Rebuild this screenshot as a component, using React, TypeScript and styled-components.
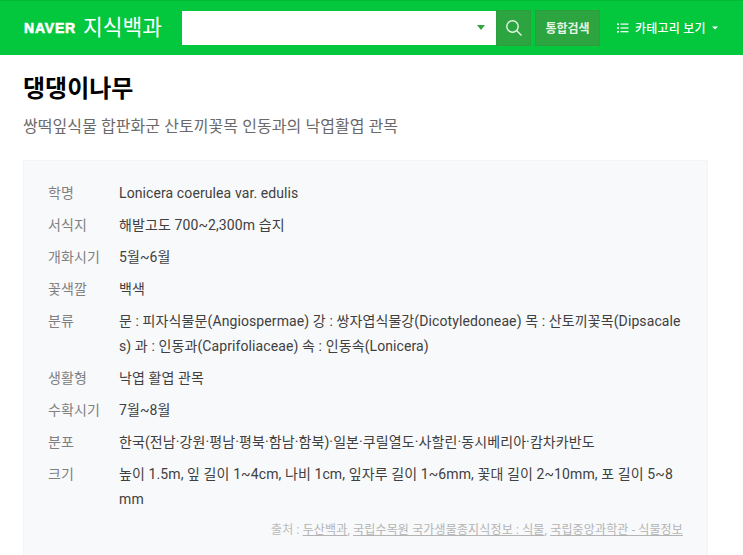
import React from "react";
import styled, { createGlobalStyle } from "styled-components";

const Global = createGlobalStyle`
  html, body { margin: 0; padding: 0; background: #fff; overflow: hidden; height: 555px; }
  body { font-family: Roboto, "Noto Sans CJK KR", "Noto Sans", sans-serif; }
  * { box-sizing: border-box; }
`;

const Page = styled.div`
  width: 743px;
  height: 555px;
  overflow: hidden;
  display: flex;
  flex-direction: column;
`;

const Header = styled.header`
  flex: none;
  height: 55px;
  background: #03c73c;
  border-top: 1px solid #02b836;
  display: flex;
  align-items: center;
  padding: 0 0 1px 24px;
`;

const Logo = styled.div`
  width: 158px;
  display: flex;
  align-items: center;
  gap: 7px;
  color: #fff;
`;

const NaverMark = styled.span`
  font-family: "Liberation Sans", sans-serif;
  font-weight: 700;
  font-size: 14px;
  letter-spacing: 0.8px;
  -webkit-text-stroke: 0.6px #fff;
`;

const LogoText = styled.span`
  font-size: 21.5px;
  font-weight: 400;
  line-height: 30px;
`;

const SearchBox = styled.div`
  width: 314px;
  height: 34px;
  background: #fff;
  display: flex;
  align-items: center;
  justify-content: flex-end;
  padding-right: 11px;
`;

const Caret = styled.span`
  width: 0;
  height: 0;
  border-left: 4px solid transparent;
  border-right: 4px solid transparent;
  border-top: 5px solid #2fa53f;
`;

const SearchButton = styled.button`
  width: 35px;
  height: 36px;
  padding: 0;
  background: #2ca540;
  border: 1px solid #2a9f3d;
  display: flex;
  align-items: center;
  justify-content: center;
`;

const TotalButton = styled.button`
  width: 65px;
  height: 36px;
  margin-left: 4px;
  padding: 0;
  background: #2ca540;
  border: 1px solid #2a9f3d;
  color: #e4f4e6;
  font-family: inherit;
  font-size: 12px;
  font-weight: 700;
`;

const CategoryButton = styled.div`
  margin-left: 17px;
  display: flex;
  align-items: center;
  color: #fff;
  font-size: 12px;
  font-weight: 500;
  letter-spacing: 0.2px;
  gap: 6px;
`;

const Content = styled.main`
  flex: 1;
  min-height: 0;
  display: flex;
  flex-direction: column;
  padding: 0 35px 0 23px;
`;

const Title = styled.h1`
  margin: 16px 0 0;
  font-size: 24px;
  line-height: 36px;
  font-weight: 700;
  color: #000;
`;

const Subtitle = styled.p`
  margin: 8px 0 0;
  font-size: 16px;
  line-height: 24px;
  font-weight: 400;
  letter-spacing: 0.07px;
  color: #6a6a6a;
`;

const Panel = styled.section`
  flex: 1;
  margin-top: 21px;
  background: #f8f9fb;
  border: 1px solid #f3f4f6;
  border-bottom: 0;
  padding: 16px 24px 0;
`;

const Row = styled.div`
  display: grid;
  grid-template-columns: 71px 1fr;
  padding: 3.5px 0;
  font-size: 14px;
  line-height: 25px;
  letter-spacing: 0.1px;
`;

const Label = styled.div`
  color: #808080;
`;

const Value = styled.div`
  color: #404040;
  word-break: break-all;
`;

const Source = styled.div`
  margin-top: 5px;
  text-align: right;
  font-size: 12px;
  line-height: 20px;
  letter-spacing: 0.15px;
  color: #bbb;
`;

const SourceLink = styled.a`
  color: #b4b4b4;
  text-decoration: underline;
`;

const rows: [string, string][] = [
  ["학명", "Lonicera coerulea var. edulis"],
  ["서식지", "해발고도 700~2,300m 습지"],
  ["개화시기", "5월~6월"],
  ["꽃색깔", "백색"],
  ["분류", "문 : 피자식물문(Angiospermae) 강 : 쌍자엽식물강(Dicotyledoneae) 목 : 산토끼꽃목(Dipsacales) 과 : 인동과(Caprifoliaceae) 속 : 인동속(Lonicera)"],
  ["생활형", "낙엽 활엽 관목"],
  ["수확시기", "7월~8월"],
  ["분포", "한국(전남·강원·평남·평북·함남·함북)·일본·쿠릴열도·사할린·동시베리아·캄차카반도"],
  ["크기", "높이 1.5m, 잎 길이 1~4cm, 나비 1cm, 잎자루 길이 1~6mm, 꽃대 길이 2~10mm, 포 길이 5~8mm"],
];

export default function App() {
  return (
    <Page>
      <Global />
      <Header>
        <Logo>
          <NaverMark>NAVER</NaverMark>
          <LogoText>지식백과</LogoText>
        </Logo>
        <SearchBox>
          <Caret />
        </SearchBox>
        <SearchButton aria-label="검색">
          <svg width="18" height="18" viewBox="0 0 18 18" fill="none" stroke="#e6f5e8" strokeWidth="1.4">
            <circle cx="7.5" cy="7.5" r="5.7" />
            <path d="M11.6 11.6 L16.5 16.5" />
          </svg>
        </SearchButton>
        <TotalButton>통합검색</TotalButton>
        <CategoryButton>
          <svg width="12" height="10" viewBox="0 0 12 10" fill="#fff">
            <rect x="0" y="0.5" width="2" height="1.6" />
            <rect x="3.5" y="0.5" width="8" height="1.2" />
            <rect x="0" y="4.2" width="2" height="1.6" />
            <rect x="3.5" y="4.4" width="8" height="1.2" />
            <rect x="0" y="7.9" width="2" height="1.6" />
            <rect x="3.5" y="8.1" width="8" height="1.2" />
          </svg>
          <span>카테고리 보기</span>
          <svg width="6" height="4" viewBox="0 0 6 4" fill="#fff">
            <path d="M0 0.5 H6 L3 3.5 Z" />
          </svg>
        </CategoryButton>
      </Header>
      <Content>
        <Title>댕댕이나무</Title>
        <Subtitle>쌍떡잎식물 합판화군 산토끼꽃목 인동과의 낙엽활엽 관목</Subtitle>
        <Panel>
          {rows.map(([k, v]) => (
            <Row key={k}>
              <Label>{k}</Label>
              <Value>{v}</Value>
            </Row>
          ))}
          <Source>
            출처 : <SourceLink>두산백과</SourceLink>, <SourceLink>국립수목원 국가생물종지식정보 : 식물</SourceLink>, <SourceLink>국립중앙과학관 - 식물정보</SourceLink>
          </Source>
        </Panel>
      </Content>
    </Page>
  );
}
